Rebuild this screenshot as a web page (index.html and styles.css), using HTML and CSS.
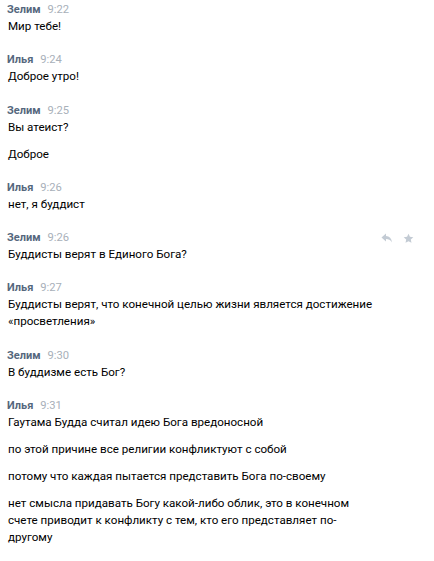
FILE: index.html
```html
<!DOCTYPE html>
<html lang="ru">
<head>
<meta charset="utf-8">
<link rel="stylesheet" href="styles.css">
</head>
<body>
<div class="history">
  <div class="group">
    <div class="head"><span class="name">Зелим</span><span class="time">9:22</span></div>
    <div class="msg">Мир тебе!</div>
  </div>
  <div class="group">
    <div class="head"><span class="name">Илья</span><span class="time">9:24</span></div>
    <div class="msg">Доброе утро!</div>
  </div>
  <div class="group">
    <div class="head"><span class="name">Зелим</span><span class="time">9:25</span></div>
    <div class="msg">Вы атеист?</div>
    <div class="msg">Доброе</div>
  </div>
  <div class="group">
    <div class="head"><span class="name">Илья</span><span class="time">9:26</span></div>
    <div class="msg">нет, я буддист</div>
  </div>
  <div class="group hovered">
    <div class="head"><span class="name">Зелим</span><span class="time">9:26</span>
      <span class="actions">
        <svg class="ico" width="12" height="10" viewBox="0 0 12 10"><path d="M5 0.5 L0.5 4.5 L5 8.5 L5 6 C7.5 6 9.5 6.8 11 9.5 C10.5 5.5 8.5 3.2 5 3 Z" fill="#c3cbd4"/></svg>
        <svg class="ico" width="11" height="11" viewBox="0 0 24 24"><path d="M12 1.5 L15.1 8.2 L22.5 9 L17 14 L18.5 21.5 L12 17.8 L5.5 21.5 L7 14 L1.5 9 L8.9 8.2 Z" fill="#c3cbd4"/></svg>
      </span>
    </div>
    <div class="msg">Буддисты верят в Единого Бога?</div>
  </div>
  <div class="group">
    <div class="head"><span class="name">Илья</span><span class="time">9:27</span></div>
    <div class="msg">Буддисты верят, что конечной целью жизни является достижение «просветления»</div>
  </div>
  <div class="group">
    <div class="head"><span class="name">Зелим</span><span class="time">9:30</span></div>
    <div class="msg">В буддизме есть Бог?</div>
  </div>
  <div class="group">
    <div class="head"><span class="name">Илья</span><span class="time">9:31</span></div>
    <div class="msg">Гаутама Будда считал идею Бога вредоносной</div>
    <div class="msg">по этой причине все религии конфликтуют с собой</div>
    <div class="msg">потому что каждая пытается представить Бога по-своему</div>
    <div class="msg">нет смысла придавать Богу какой-либо облик, это в конечном счете приводит к конфликту с тем, кто его представляет по-другому</div>
  </div>
</div>
</body>
</html>
```
FILE: styles.css
```css
html, body {
  margin: 0;
  padding: 0;
  background: #ffffff;
}
body {
  font-family: Roboto, "Liberation Sans", Arial, sans-serif;
  font-size: 11.6px;
  color: #000000;
}
.history {
  display: flex;
  flex-direction: column;
  gap: 17.3px;
  padding: 2px 0 0 8px;
}
.group {
  display: flex;
  flex-direction: column;
  gap: 10px;
}
.head {
  display: flex;
  align-items: center;
  height: 16px;
  line-height: 16px;
  margin-bottom: -10px;
  margin-left: -1px;
}
.name {
  font-weight: 700;
  font-size: 11px;
  color: #55677d;
}
.time {
  margin-left: 7px;
  font-size: 11.2px;
  color: #a8b0b9;
}
.actions {
  margin-left: auto;
  margin-right: 20px;
  display: flex;
  align-items: center;
  gap: 10px;
}
.ico {
  display: block;
}
.msg {
  line-height: 17px;
  max-width: 369px;
}
```
